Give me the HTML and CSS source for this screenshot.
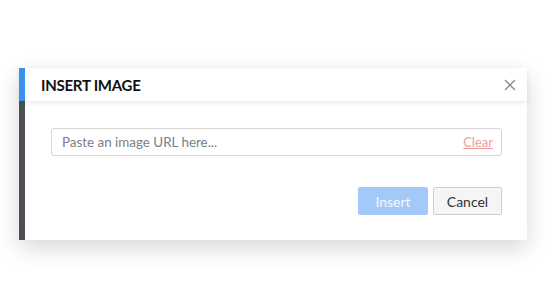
FILE: index.html
```html
<!DOCTYPE html>
<html>
<head>
<meta charset="utf-8">
<link rel="stylesheet" href="styles.css">
</head>
<body>
<div class="page">
  <div class="dialog">
    <div class="header">
      <span class="title">INSERT IMAGE</span>
      <button class="close" aria-label="Close">
        <svg width="12" height="12" viewBox="0 0 12 12"><path d="M1 1L11 11M11 1L1 11" stroke="#888" stroke-width="1.3" fill="none"/></svg>
      </button>
    </div>
    <div class="body">
      <div class="field">
        <span class="placeholder">Paste an image URL here...</span>
        <a class="clear">Clear</a>
      </div>
      <div class="actions">
        <button class="btn btn-primary">Insert</button>
        <button class="btn btn-default">Cancel</button>
      </div>
    </div>
  </div>
</div>
</body>
</html>
```
FILE: styles.css
```css
html, body { margin: 0; padding: 0; background: #fff; }
body { font-family: Lato, "Open Sans", sans-serif; }
.page { padding: 68px 0 0 19px; min-height: 307px; box-sizing: border-box; }
.dialog {
  width: 508px;
  background: #fff;
  box-shadow: 0 8px 22px rgba(0,0,0,0.16);
}
.header {
  height: 33px;
  box-sizing: border-box;
  border-left: 6px solid #3b8ff0;
  display: flex;
  align-items: center;
  justify-content: space-between;
  padding: 0 10px 0 16px;
  box-shadow: 0 2px 5px rgba(0,0,0,0.08);
  position: relative;
}
.title { font-weight: 700; font-size: 15px; color: #111; letter-spacing: -0.25px; }
.close { border: 0; background: none; padding: 0; width: 14px; height: 14px; display: flex; align-items: center; justify-content: center; }
.body {
  border-left: 6px solid #4b4e52;
  padding: 27px 25px 25px 26px;
}
.field {
  height: 28px;
  box-sizing: border-box;
  border: 1px solid #d6d6d6;
  border-radius: 3px;
  display: flex;
  align-items: center;
  justify-content: space-between;
  padding: 0 8px 0 10px;
}
.placeholder { font-size: 13.4px; color: #77808a; }
.clear { font-size: 13px; color: #f09a9a; text-decoration: underline; }
.actions { display: flex; justify-content: flex-end; gap: 5px; margin-top: 31px; }
.btn {
  height: 28px;
  width: 70px;
  box-sizing: border-box;
  border-radius: 2px;
  font-family: Lato, sans-serif;
  font-size: 14px;
  padding: 0;
}
.btn-primary { background: #a3c9f8; border: 1px solid #a3c9f8; color: #f4f8ff; }
.btn-default { background: #f5f5f5; border: 1px solid #cfcfcf; color: #333; width: 69px; }
```
